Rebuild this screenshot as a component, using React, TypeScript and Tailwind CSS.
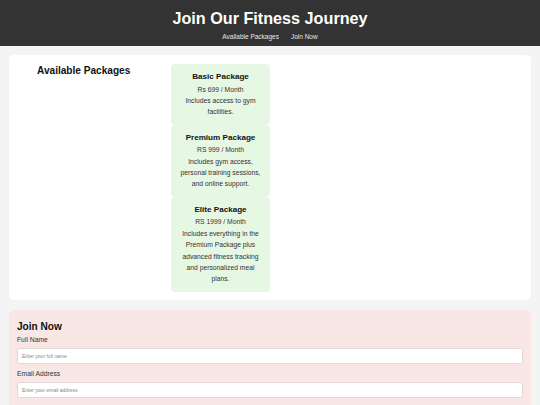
import React from 'react'

const PACKAGES = [
  { name: 'Basic Package', price: 'Rs 699 / Month', desc: 'Includes access to gym facilities.' },
  { name: 'Premium Package', price: 'RS 999 / Month', desc: 'Includes gym access, personal training sessions, and online support.' },
  {
    name: 'Elite Package',
    price: 'RS 1999 / Month',
    desc: 'Includes everything in the Premium Package plus advanced fitness tracking and personalized meal plans.',
  },
]

export default function App() {
  return (
    <div className="min-h-screen bg-[#f4f4f4] font-['Liberation_Sans',Arial,sans-serif] text-[#222]">
      {/* Header */}
      <header className="h-[46px] bg-[#333333] text-white flex flex-col items-center pt-[8.5px]">
        <h1 className="text-[16.2px] leading-[19px] font-bold">Join Our Fitness Journey</h1>
        <nav className="mt-[4px] flex gap-[12px] text-[6.5px] leading-[9px] text-[#e8e8e8]">
          <a href="#packages">Available Packages</a>
          <a href="#join">Join Now</a>
        </nav>
      </header>

      {/* Packages */}
      <section id="packages" className="mx-[9px] mt-[9px] bg-white rounded-[5px] p-[9px] pb-[8px] flex">
        <div className="w-[153px] pl-[19px] pt-[1px]">
          <h2 className="text-[10.1px] leading-[12px] font-bold text-[#111]">Available Packages</h2>
        </div>
        <div className="w-[99px] flex flex-col">
          {PACKAGES.map((p) => (
            <div key={p.name} className="bg-[#e6f7e4] rounded-[4px] px-[6.5px] py-[7px] text-center text-[6.75px] leading-[11.4px] text-[#333]">
              <h3 className="text-[8.1px] leading-[12.5px] font-bold text-[#111]">{p.name}</h3>
              <p>{p.price}</p>
              <p>{p.desc}</p>
            </div>
          ))}
        </div>
      </section>

      {/* Join */}
      <section id="join" className="mx-[9px] mt-[10px] bg-[#f8e7e5] rounded-[5px] px-[8px] pt-[11px] pb-[10px]">
        <h2 className="text-[10.1px] leading-[12px] font-bold text-[#111] mb-[1px]">Join Now</h2>
        <form className="flex flex-col text-[6.75px] leading-[11px] text-[#333]">
          <label className="mb-[3.5px]">Full Name</label>
          <input
            className="h-[16px] bg-white border border-[#e3d6d6] rounded-[2px] px-[4px] text-[5px] placeholder:text-[#888] mb-[3.5px]"
            placeholder="Enter your full name"
          />
          <label className="mb-[3.5px]">Email Address</label>
          <input
            className="h-[16px] bg-white border border-[#e3d6d6] rounded-[2px] px-[4px] text-[5px] placeholder:text-[#888] mb-[3.5px]"
            placeholder="Enter your email address"
          />
        </form>
      </section>
    </div>
  )
}
